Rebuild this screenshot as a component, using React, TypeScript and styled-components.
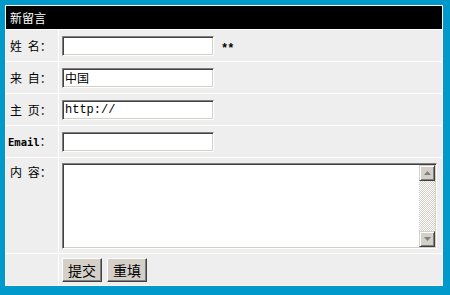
import React from "react";
import styled, { createGlobalStyle } from "styled-components";

const Global = createGlobalStyle`
  html, body { margin: 0; padding: 0; background: #0099cc; }
  body { width: 450px; height: 295px; overflow: hidden; }
`;

const Page = styled.div`
  padding: 5px;
  font-family: "Liberation Mono", "Noto Sans CJK SC", monospace;
  font-size: 12px;
  color: #000;
`;

const Grid = styled.div`
  width: 436px;
  display: grid;
  grid-template-columns: 52px 383px;
  grid-template-rows: 23px 31px 31px 31px 31px 95px 31px;
  gap: 1px;
  padding: 1px;
  background: #ffffff;
`;

const Header = styled.div`
  grid-column: 1 / span 2;
  background: #000;
  color: #fff;
  display: flex;
  align-items: center;
  padding-left: 4px;
  font-family: "Noto Sans CJK SC", sans-serif;
  font-size: 12px;
`;

const Label = styled.div<{ $top?: boolean }>`
  background: #eeeeee;
  display: flex;
  align-items: ${(p) => (p.$top ? "flex-start" : "center")};
  padding-top: ${(p) => (p.$top ? "7px" : "0")};
  padding-left: 4px;
  font-family: "Noto Sans CJK SC", sans-serif;
  font-size: 12px;
  white-space: pre;
`;

const LabelText = styled.span`
  word-spacing: 3px;
  line-height: 14px;
`;

const Latin = styled.span`
  font-family: "DejaVu Sans Mono", monospace;
  font-weight: bold;
  font-size: 10.5px;
  margin-left: -2px;
`;

const Cell = styled.div<{ $top?: boolean }>`
  background: #eeeeee;
  display: flex;
  align-items: ${(p) => (p.$top ? "flex-start" : "center")};
  padding-left: 3px;
  padding-top: ${(p) => (p.$top ? "5px" : "1px")};
  gap: 7px;
`;

const TextInput = styled.input`
  box-sizing: border-box;
  width: 152px;
  height: 20px;
  margin: 0;
  padding: 0 2px;
  border-top: 1px solid #808080;
  border-left: 1px solid #808080;
  border-right: 1px solid #ffffff;
  border-bottom: 1px solid #ffffff;
  box-shadow: inset 1px 1px 0 #404040, inset -1px -1px 0 #d4d0c8;
  background: #fff;
  font-family: "Liberation Mono", "Noto Sans CJK SC", monospace;
  font-size: 12px;
  color: #000;
  outline: none;
`;

const Required = styled.span`
  font-family: "Liberation Mono", monospace;
  font-weight: bold;
  font-size: 12px;
  letter-spacing: -1px;
  padding-top: 6px;
`;

const AreaBox = styled.div`
  box-sizing: border-box;
  width: 375px;
  height: 86px;
  display: flex;
  border-top: 1px solid #808080;
  border-left: 1px solid #808080;
  border-right: 1px solid #ffffff;
  border-bottom: 1px solid #ffffff;
  box-shadow: inset 1px 1px 0 #404040, inset -1px -1px 0 #d4d0c8;
  padding: 1px;
  background: #fff;
`;

const Area = styled.textarea`
  flex: 1;
  border: none;
  margin: 0;
  padding: 2px;
  resize: none;
  outline: none;
  background: #fff;
  font-family: "Liberation Mono", "Noto Sans CJK SC", monospace;
  font-size: 12px;
`;

const Scrollbar = styled.div`
  width: 16px;
  display: flex;
  flex-direction: column;
  background: repeating-conic-gradient(#d4d0c8 0 25%, #ffffff 0 50%) 0 0 / 2px 2px;
`;

const ScrollButton = styled.div`
  box-sizing: border-box;
  height: 16px;
  width: 16px;
  background: #d4d0c8;
  border-top: 1px solid #d4d0c8;
  border-left: 1px solid #d4d0c8;
  border-right: 1px solid #404040;
  border-bottom: 1px solid #404040;
  box-shadow: inset 1px 1px 0 #ffffff, inset -1px -1px 0 #808080;
  display: flex;
  align-items: center;
  justify-content: center;
`;

const Track = styled.div`
  flex: 1;
`;

const Buttons = styled.div`
  background: #eeeeee;
  display: flex;
  align-items: center;
  padding-left: 3px;
  gap: 5px;
`;

const Button = styled.button`
  box-sizing: border-box;
  width: 40px;
  height: 24px;
  margin: 0;
  padding: 0;
  background: #d4d0c8;
  border-top: 1px solid #ffffff;
  border-left: 1px solid #ffffff;
  border-right: 1px solid #404040;
  border-bottom: 1px solid #404040;
  box-shadow: inset -1px -1px 0 #808080;
  font-family: "Noto Sans CJK SC", sans-serif;
  font-size: 14px;
  line-height: 20px;
  color: #000;
`;

const Arrow = ({ up }: { up?: boolean }) => (
  <svg width="7" height="4" viewBox="0 0 7 4">
    <polygon points={up ? "3.5,0 7,4 0,4" : "0,0 7,0 3.5,4"} fill="#808080" />
  </svg>
);

export default function App() {
  return (
    <Page>
      <Global />
      <Grid>
        <Header>新留言</Header>

        <Label>
          <LabelText>姓 名：</LabelText>
        </Label>
        <Cell>
          <TextInput defaultValue="" />
          <Required>**</Required>
        </Cell>

        <Label>
          <LabelText>来 自：</LabelText>
        </Label>
        <Cell>
          <TextInput defaultValue="中国" />
        </Cell>

        <Label>
          <LabelText>主 页：</LabelText>
        </Label>
        <Cell>
          <TextInput defaultValue="http://" />
        </Cell>

        <Label>
          <LabelText>
            <Latin>Email</Latin>：
          </LabelText>
        </Label>
        <Cell>
          <TextInput defaultValue="" />
        </Cell>

        <Label $top>
          <LabelText>内 容：</LabelText>
        </Label>
        <Cell $top>
          <AreaBox>
            <Area />
            <Scrollbar>
              <ScrollButton>
                <Arrow up />
              </ScrollButton>
              <Track />
              <ScrollButton>
                <Arrow />
              </ScrollButton>
            </Scrollbar>
          </AreaBox>
        </Cell>

        <Label />
        <Buttons>
          <Button>提交</Button>
          <Button>重填</Button>
        </Buttons>
      </Grid>
    </Page>
  );
}
